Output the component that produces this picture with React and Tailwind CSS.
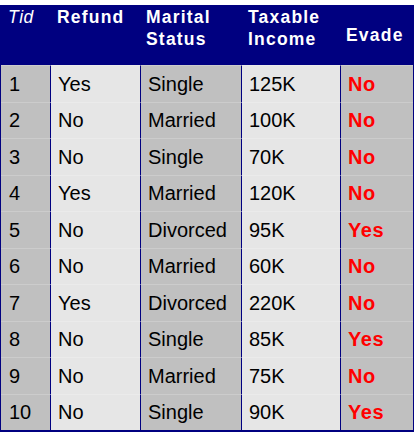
import React from 'react'

const rows = [
    ['1', 'Yes', 'Single', '125K', 'No'],
    ['2', 'No', 'Married', '100K', 'No'],
    ['3', 'No', 'Single', '70K', 'No'],
    ['4', 'Yes', 'Married', '120K', 'No'],
    ['5', 'No', 'Divorced', '95K', 'Yes'],
    ['6', 'No', 'Married', '60K', 'No'],
    ['7', 'Yes', 'Divorced', '220K', 'No'],
    ['8', 'No', 'Single', '85K', 'Yes'],
    ['9', 'No', 'Married', '75K', 'No'],
    ['10', 'No', 'Single', '90K', 'Yes'],
]

const cell = 'h-[36.5px] flex items-center pl-[7px] border-t border-t-white/20'

const App = () => {
    return (
        <div className="w-[416px] h-[433px] bg-white pt-[5px] font-['Liberation_Sans',Arial,sans-serif]">
            <div className="w-[414px] border-x border-b-2 border-[#000080]">
                <div className="grid grid-cols-[49px_90px_101px_99px_73px] h-[60px] bg-[#000080] text-white text-[17.5px] leading-[22px] font-bold tracking-[1.2px]">
                    <div className="pl-[7px] pt-[1px] italic font-normal tracking-[0.6px]">Tid</div>
                    <div className="pl-[7px] pt-[1px]">Refund</div>
                    <div className="pl-[6px] pt-[1px]">Marital<br />Status</div>
                    <div className="pl-[7px] pt-[1px]">Taxable<br />Income</div>
                    <div className="pl-[6px] flex items-center">Evade</div>
                </div>
                <div className="grid grid-cols-[49px_90px_101px_99px_73px] text-[20px] text-black">
                    {rows.map(([tid, refund, status, income, evade]) => (
                        <React.Fragment key={tid}>
                            <div className={`${cell} bg-[#c0c0c0] pl-[8px]`}>{tid}</div>
                            <div className={`${cell} bg-[#e6e6e6] border-l border-l-[#000080]`}>{refund}</div>
                            <div className={`${cell} bg-[#c0c0c0] border-l border-l-[#000080] pl-[6px]`}>{status}</div>
                            <div className={`${cell} bg-[#e6e6e6] border-l border-l-[#000080]`}>{income}</div>
                            <div className={`${cell} bg-[#c0c0c0] border-l border-l-[#000080] pl-[6px] text-[#ff0000] font-bold tracking-[0.6px]`}>{evade}</div>
                        </React.Fragment>
                    ))}
                </div>
            </div>
        </div>
    )
}

export default App
